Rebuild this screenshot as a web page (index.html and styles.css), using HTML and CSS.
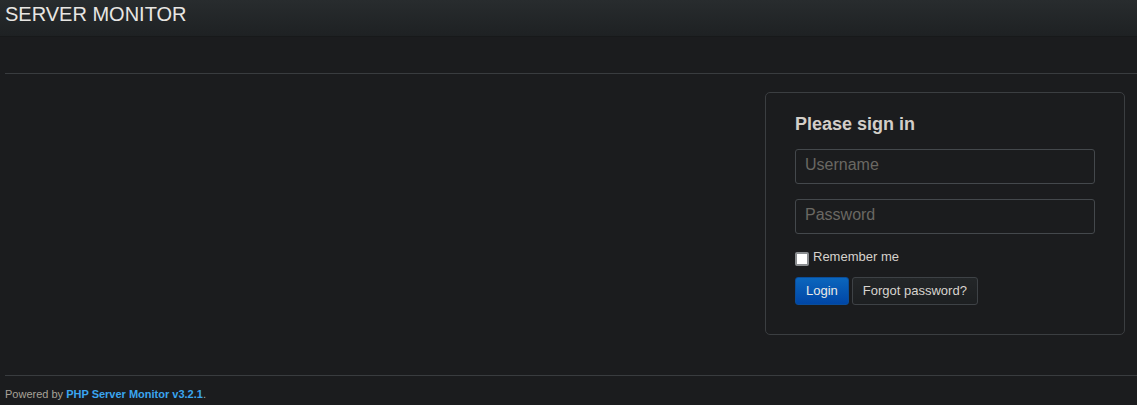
FILE: index.html
```html
<!DOCTYPE html>
<html lang="en">
<head>
<meta charset="utf-8">
<title>Server Monitor</title>
<link rel="stylesheet" href="styles.css">
</head>
<body>
<header class="navbar">
  <span class="brand">SERVER MONITOR</span>
</header>
<main class="page">
  <hr class="rule rule-top">
  <div class="row">
    <form class="signin">
      <h2 class="signin-heading">Please sign in</h2>
      <input class="field" type="text" placeholder="Username">
      <input class="field" type="password" placeholder="Password">
      <label class="remember"><input class="check" type="checkbox"><span>Remember me</span></label>
      <div class="actions">
        <button class="btn btn-primary" type="button">Login</button>
        <button class="btn" type="button">Forgot password?</button>
      </div>
    </form>
  </div>
  <hr class="rule rule-bottom">
  <footer class="footer">Powered by <a class="footer-link" href="#">PHP Server Monitor v3.2.1</a>.</footer>
</main>
</body>
</html>
```
FILE: styles.css
```css
* { box-sizing: border-box; }
html, body { margin: 0; padding: 0; }
body {
  background: #1b1c1e;
  color: #d6d2cc;
  font-family: "Liberation Sans", Arial, sans-serif;
  font-size: 13px;
  overflow: hidden;
}
.navbar {
  height: 37px;
  background: linear-gradient(#282c2e, #1e2123);
  border-bottom: 1px solid #17191a;
  padding-left: 5px;
}
.brand {
  display: block;
  font-size: 20px;
  line-height: 28px;
  color: #e8e6e3;
}
.page { padding-left: 5px; }
.rule {
  border: 0;
  height: 1px;
  background: #393c3f;
  margin: 0;
}
.rule-top { margin-top: 36px; }
.row {
  display: flex;
  justify-content: flex-end;
  padding-right: 12px;
  margin-top: 18px;
}
.signin {
  width: 360px;
  border: 1px solid #3b3e41;
  border-radius: 5px;
  padding: 21px 29px 29px;
  display: flex;
  flex-direction: column;
  align-items: flex-start;
}
.signin-heading {
  margin: 0 0 15px;
  font-size: 18px;
  line-height: 20px;
  font-weight: bold;
  color: #d3cec8;
}
.field {
  width: 300px;
  height: 35px;
  margin: 0 0 15px;
  padding: 0 9px 3px;
  background: #1b1c1e;
  border: 1px solid #44484c;
  border-radius: 3px;
  font-family: "Liberation Sans", Arial, sans-serif;
  font-size: 16px;
  color: #d6d2cc;
  outline: none;
}
.field::placeholder { color: #6a6863; }
.remember {
  display: flex;
  align-items: flex-start;
  gap: 4px;
  margin-top: -1px;
  font-size: 13px;
  line-height: 18px;
  color: #d6d2cc;
}
.check {
  appearance: none;
  -webkit-appearance: none;
  width: 14px;
  height: 14px;
  margin: 4px 0 0;
  background: #fff;
  border: 2px solid #8a8d90;
  border-radius: 2px;
}
.actions {
  display: flex;
  gap: 3px;
  margin-top: 11px;
}
.btn {
  height: 28px;
  padding: 0 10px;
  font-family: "Liberation Sans", Arial, sans-serif;
  font-size: 13px;
  line-height: 26px;
  color: #d8d4cf;
  background: linear-gradient(#232628, #1d1f21);
  border: 1px solid #3e4246;
  border-radius: 3px;
  cursor: pointer;
}
.btn-primary {
  color: #eceae7;
  background: linear-gradient(#0b66bd, #0046a6);
  border-color: #0a4d9a;
}
.rule-bottom { margin-top: 40px; }
.footer {
  margin-top: 10px;
  font-size: 11px;
  line-height: 16px;
  color: #a8a398;
}
.footer-link {
  color: #3aa5ef;
  font-weight: bold;
  text-decoration: none;
}
```
